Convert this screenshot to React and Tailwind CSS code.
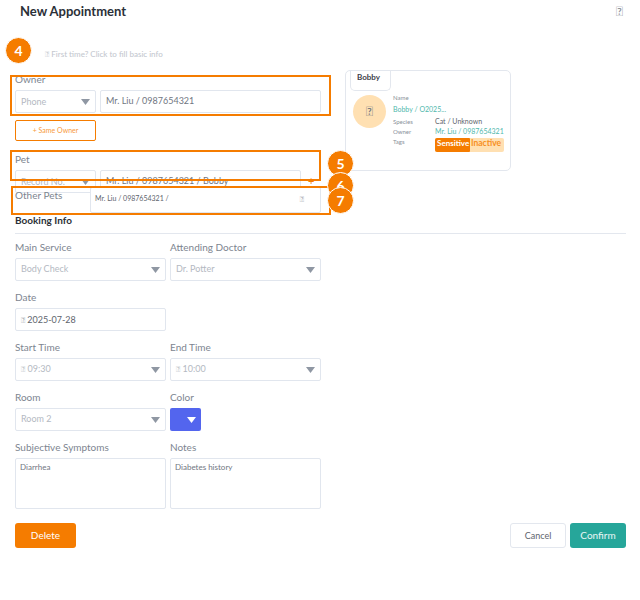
const TOFU = "\u{E000}";

function Caret({ color = "#8f97a3" }) {
  return (
    <svg width="9" height="6" viewBox="0 0 9 6" className="absolute right-[5px] top-1/2 -translate-y-[3px]">
      <path d="M0 0H9L4.5 6Z" fill={color} />
    </svg>
  );
}

function Label({ children, className = "" }) {
  return <div className={`h-[14px] text-[10px] leading-[14px] text-[#7d8590] ${className}`}>{children}</div>;
}

function Select({ children, className = "w-[151px]" }) {
  return (
    <div className={`relative flex h-[23px] items-center rounded-[2px] border border-[#e1e6ee] bg-white pb-[2px] pl-[5px] text-[9px] text-[#b4b9c2] ${className}`}>
      <span>{children}</span>
      <Caret />
    </div>
  );
}

function Field({ label, children, className = "w-[151px]" }) {
  return (
    <div className={`flex flex-col gap-[4px] ${className}`}>
      <Label>{label}</Label>
      {children}
    </div>
  );
}

function Marker({ n, className }) {
  return (
    <div className={`absolute flex h-[27px] w-[27px] items-center justify-center rounded-full border border-white bg-[#f57c00] text-[14px] font-bold text-white ${className}`}>
      {n}
    </div>
  );
}

function Box({ className }) {
  return <div className={`absolute border-2 border-[#f57c00] ${className}`} />;
}

function Row({ k, children, className = "" }) {
  return (
    <div className={`flex h-[10px] items-center ${className}`}>
      <span className="w-[42px] text-[6px] text-[#8a9099]">{k}</span>
      {children}
    </div>
  );
}

export default function App() {
  return (
    <div className="relative h-[600px] w-[640px] overflow-hidden bg-white font-['Lato','Liberation_Sans',sans-serif]">
      <div className="flex h-[23px] items-center justify-between pl-5 pr-[17px]">
        <span className="text-[13px] font-bold text-[#2b3038]">New Appointment</span>
        <span className="text-[13px] text-[#8a9099]">{TOFU}</span>
      </div>

      <div className="ml-[45px] mt-[25px] h-[12px] text-[8px] font-medium leading-[12px] text-[#c4c8cf]">
        {TOFU} First time? Click to fill basic info
      </div>

      <div className="mt-[13px] flex px-[15px]">
        <div className="w-[306px]">
          <Label className="-mt-[1px]">Owner</Label>
          <div className="mt-[4px] flex gap-1">
            <div className="relative flex h-[23px] w-[81px] items-center rounded-[2px] border border-[#e1e6ee] bg-white pl-[5px] text-[9px] text-[#b4b9c2]">
              <span>Phone</span>
              <Caret />
            </div>
            <div className="flex h-[23px] flex-1 items-center rounded-[2px] border border-[#e1e6ee] pb-[2px] pl-[5px] text-[9px] text-[#70767f]">
              Mr. Liu / 0987654321
            </div>
          </div>
          <div className="mt-[7px] flex h-[21px] w-[81px] items-center justify-center rounded-[2px] border border-[#f57c00] text-[7px] text-[#f79a3e]">
            + Same Owner
          </div>

          <Label className="mt-[11px]">Pet</Label>
          <div className="mt-[4px] flex gap-1">
            <div className="relative flex h-[23px] w-[81px] items-center rounded-[2px] border border-[#e1e6ee] bg-white pl-[5px] text-[9px] text-[#b4b9c2]">
              <span>Record No.</span>
              <Caret />
            </div>
            <div className="flex h-[24px] w-[201px] items-center rounded-[2px] border border-[#e1e6ee] pb-[2px] pl-[5px] text-[9px] text-[#70767f]">
              Mr. Liu / 0987654321 / Bobby
            </div>
            <span className="ml-[3px] mt-[1px] text-[11px] leading-[20px] text-[#f57c00]">+</span>
          </div>

          <div className="relative -mt-[7px] flex h-[26px] items-start bg-transparent">
            <Label className="w-[75px] pt-px">Other Pets</Label>
            <div className="flex h-[26px] w-[231px] items-center justify-between rounded-[2px] border border-[#e1e6ee] bg-white pb-[3px] pl-[4px] pr-[16px] text-[7px] text-[#5e646d]">
              <span>Mr. Liu / 0987654321 /</span>
              <span className="text-[8px] text-[#a0a5ad]">{TOFU}</span>
            </div>
          </div>
        </div>

        <div className="relative -mt-[3px] ml-[24px] h-[101px] w-[166px] rounded-[5px] border border-[#e3e7ee]">
          <div className="ml-[4px] h-[20px] w-[41px] rounded-b-[5px] border border-t-0 border-[#e3e7ee] pl-[6px] text-[8px] font-bold text-[#3b4048]">
            Bobby
          </div>
          <div className="mt-[2px] flex pl-[7px]">
            <div className="mt-[2px] flex h-[33px] w-[33px] items-center justify-center rounded-full bg-[#ffe0b2] text-[13px] text-[#70767f]">
              {TOFU}
            </div>
            <div className="ml-[7px] flex-1">
              <div className="h-[9px] text-[6px] leading-[9px] text-[#8a9099]">Name</div>
              <div className="mt-[2px] h-[11px] text-[7px] leading-[11px] text-[#4fb7ac]">Bobby / O2025...</div>
              <Row k="Species" className="mt-[1px]">
                <span className="text-[7px] text-[#5e646d]">Cat / Unknown</span>
              </Row>
              <Row k="Owner">
                <span className="mt-px text-[7px] text-[#4fb7ac]">Mr. Liu / 0987654321</span>
              </Row>
              <div className="flex">
                <span className="mt-[1px] w-[42px] text-[6px] leading-[9px] text-[#8a9099]">Tags</span>
                <div className="mt-[2px] flex h-[14px] w-[69px] overflow-hidden rounded-[2px] bg-[#ffe0b2] text-[8px] font-bold leading-[11px]">
                  <span className="w-[35px] shrink-0 rounded-r-[1px] bg-[#f57c00] pl-[2px] text-white">Sensitive</span>
                  <span className="pl-[1px] text-[8.5px] text-[#f78f1e]">Inactive</span>
                </div>
              </div>
            </div>
          </div>
        </div>
      </div>

      <div className="ml-[15px] mr-[14px]">
        <div className="h-[14px] text-[10px] font-bold leading-[14px] text-[#2b3038]">Booking Info</div>
        <div className="mt-[6px] border-t border-[#e3e7ee]" />

        <div className="mt-[6px] flex gap-1">
          <Field label="Main Service"><Select>Body Check</Select></Field>
          <Field label="Attending Doctor"><Select>Dr. Potter</Select></Field>
        </div>

        <Field label="Date" className="mt-[9px] w-[151px]">
          <div className="flex h-[23px] items-center rounded-[2px] border border-[#e1e6ee] pl-[5px] text-[9px] text-[#5e646d]">
            <span className="mr-[2px] text-[8px] text-[#a0a5ad]">{TOFU}</span>2025-07-28
          </div>
        </Field>

        <div className="mt-[9px] flex gap-1">
          <Field label="Start Time"><Select><span className="text-[8px]">{TOFU}</span> 09:30</Select></Field>
          <Field label="End Time"><Select><span className="text-[8px]">{TOFU}</span> 10:00</Select></Field>
        </div>

        <div className="mt-[9px] flex gap-1">
          <Field label="Room"><Select>Room 2</Select></Field>
          <Field label="Color" className="w-[31px]">
            <div className="relative h-[23px] w-[31px] rounded-[2px] bg-[#5365ee]">
              <Caret color="#ffffff" />
            </div>
          </Field>
        </div>

        <div className="mt-[9px] flex gap-1">
          <Field label="Subjective Symptoms">
            <div className="h-[51px] rounded-[2px] border border-[#e1e6ee] px-[4px] py-[2px] text-[8px] leading-[12px] text-[#70767f]">Diarrhea</div>
          </Field>
          <Field label="Notes">
            <div className="h-[51px] rounded-[2px] border border-[#e1e6ee] px-[4px] py-[2px] text-[8px] leading-[12px] text-[#70767f]">Diabetes history</div>
          </Field>
        </div>

        <div className="mt-[14px] flex items-center">
          <div className="flex h-[25px] w-[61px] items-center justify-center rounded-[3px] bg-[#f57c00] text-[10px] text-white">Delete</div>
          <div className="ml-auto flex h-[25px] w-[56px] items-center justify-center rounded-[3px] border border-[#e3e7ee] text-[9px] text-[#5e646d]">Cancel</div>
          <div className="ml-1 flex h-[25px] w-[56px] items-center justify-center rounded-[3px] bg-[#26a69a] text-[10px] text-white/90">Confirm</div>
        </div>
      </div>

      <Box className="left-[10px] top-[75px] h-[41px] w-[321px]" />
      <Box className="left-[10px] top-[150px] h-[31px] w-[311px]" />
      <Box className="left-[11px] top-[186px] h-[29px] w-[320px]" />
      <Marker n="4" className="left-[5px] top-[37px]" />
      <Marker n="5" className="left-[327px] top-[150px]" />
      <Marker n="6" className="left-[327px] top-[172px]" />
      <Marker n="7" className="left-[327px] top-[187px]" />
    </div>
  );
}
